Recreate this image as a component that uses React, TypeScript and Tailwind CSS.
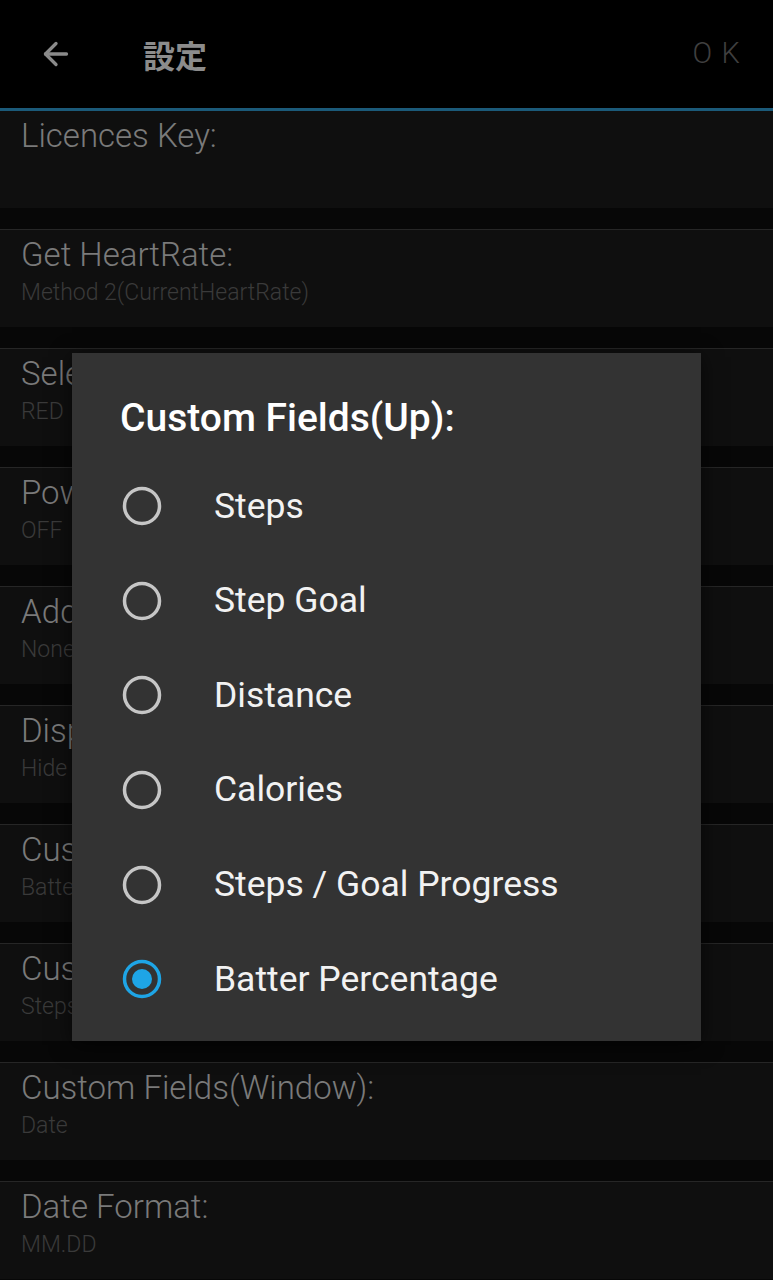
import { ArrowLeft } from "lucide-react"

const settings = [
  { title: "Licences Key:", value: "" },
  { title: "Get HeartRate:", value: "Method 2(CurrentHeartRate)" },
  { title: "Select Color:", value: "RED" },
  { title: "Power Saving:", value: "OFF" },
  { title: "Add Data:", value: "None" },
  { title: "Display Seconds:", value: "Hide" },
  { title: "Custom Fields(Up):", value: "Batter Percentage" },
  { title: "Custom Fields(Down):", value: "Steps" },
  { title: "Custom Fields(Window):", value: "Date" },
  { title: "Date Format:", value: "MM.DD" },
]

const options = ["Steps", "Step Goal", "Distance", "Calories", "Steps / Goal Progress", "Batter Percentage"]
const selected = "Batter Percentage"

function Radio({ checked }: { checked: boolean }) {
  return (
    <svg width="40" height="40" viewBox="0 0 40 40" aria-hidden="true">
      <circle cx="20" cy="20" r="17.5" fill="none" stroke={checked ? "#1ea5e6" : "#c6c6c6"} strokeWidth="3.5" />
      {checked && <circle cx="20" cy="20" r="10" fill="#1ea5e6" />}
    </svg>
  )
}

export default function App() {
  return (
    <div className="relative w-[773px] h-[1280px] overflow-hidden bg-[#070707] font-['Roboto','Noto_Sans_CJK_JP',sans-serif]">
      {/* Toolbar */}
      <header className="flex items-center h-[108px] bg-black pl-[38px] pr-[24px]">
        <ArrowLeft className="w-[36px] h-[36px] text-[#8a8a8a]" strokeWidth={2.2} />
        <h1 className="ml-[69px] text-[32px] font-bold text-[#8c8c8c] font-['Noto_Sans_CJK_JP',sans-serif] leading-none">
          設定
        </h1>
        <span className="ml-auto text-[29px] tracking-[0.32em] text-[#3f3f3f] font-light">OK</span>
      </header>
      <div className="h-[3px] bg-[#1b5a79]" />

      {/* Settings list */}
      <div className="flex flex-col">
        {settings.map((s, i) => (
          <div key={s.title} className={i === 0 ? "" : "border-t border-[#262626] mt-[21px]"}>
            <div className="h-[97px] bg-[#0f0f0f] pl-[21px] pt-[7px]">
              <div className="text-[33px] leading-[36px] font-light text-[#7a7a7a]">{s.title}</div>
              <div className="text-[23px] leading-[26px] font-light text-[#3a3a3a] mt-[7px]">{s.value}</div>
            </div>
          </div>
        ))}
      </div>

      {/* Dialog */}
      <div className="absolute left-[72px] top-[353px] w-[629px] h-[688px] bg-[#333333] shadow-[0_4px_20px_rgba(0,0,0,0.6)]">
        <div className="pl-[48px] pt-[44px] text-[39px] leading-[42px] font-medium text-white">
          Custom Fields(Up):
        </div>
        <div className="flex flex-col mt-[20px]">
          {options.map((o) => (
            <div key={o} className="flex items-center h-[94.6px] pl-[50px]">
              <Radio checked={o === selected} />
              <span className="ml-[52px] text-[35.5px] text-[#f2f2f2]">{o}</span>
            </div>
          ))}
        </div>
      </div>
    </div>
  )
}
